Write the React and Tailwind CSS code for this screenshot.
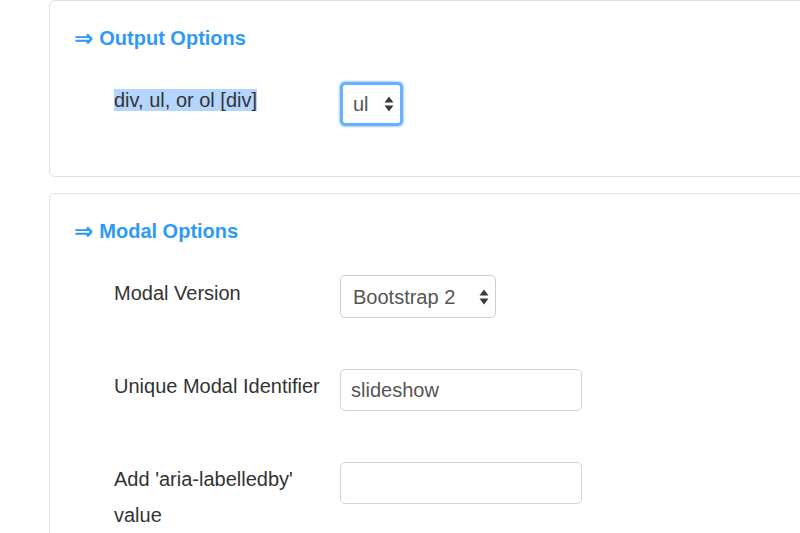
import React from 'react'

const Arrows = () => (
  <svg width="10" height="16" viewBox="0 0 10 16" className="shrink-0">
    <path d="M5 0.5 L9.5 6.5 L0.5 6.5 Z" fill="#3a3a3a" />
    <path d="M0.5 9.5 L9.5 9.5 L5 15.5 Z" fill="#3a3a3a" />
  </svg>
)

const Heading = ({children}) => (
  <h2 className="h-[28px] flex items-center text-[20px] leading-7 font-bold text-[#2f9af5] mb-[30px]">
    <span className="font-['DejaVu_Sans',sans-serif] text-[23px] leading-none mr-[6px]">⇒</span>
    <span>{children}</span>
  </h2>
)

const Row = ({label, children, last}) => (
  <div className={"flex items-start " + (last ? "mb-[12px]" : "mb-[50px]")}>
    <div className="w-[266px] pl-[40px] text-[20px] leading-[36px] text-[#333] shrink-0">{label}</div>
    {children}
  </div>
)

const App = () => {
  return (
    <div className="w-[800px] h-[533px] overflow-hidden bg-white font-['Liberation_Sans',Arial,sans-serif]">
      <div className="ml-[49px] w-[900px]">
        {/* output options */}
        <div className="border border-[#e2e2e2] rounded-[6px] pt-[23px] pl-[24px] mb-[16px]">
          <Heading>Output Options</Heading>
          <Row label={<span className="bg-[#b4d6fe]">div, ul, or ol [div]</span>}>
            <div className="w-[63px] h-[44px] rounded-[5px] border-[3px] border-[#6aaff8] shadow-[0_0_2px_1px_#a9d0fb] flex items-center justify-between pl-[10px] pr-[6px] text-[20px] text-[#555]">
              <span>ul</span>
              <Arrows />
            </div>
          </Row>
        </div>

        {/* modal options */}
        <div className="border border-[#e2e2e2] rounded-[6px] pt-[23px] pl-[24px]">
          <Heading>Modal Options</Heading>
          <Row label="Modal Version">
            <div className="w-[156px] h-[43px] rounded-[5px] border border-[#cfcfcf] flex items-center justify-between pl-[12px] pr-[6px] text-[20px] text-[#555]">
              <span>Bootstrap 2</span>
              <Arrows />
            </div>
          </Row>
          <Row label="Unique Modal Identifier">
            <input
              defaultValue="slideshow"
              className="w-[242px] h-[42px] rounded-[5px] border border-[#d4d4d4] px-[10px] text-[20px] text-[#555] outline-none mt-[1px]"
            />
          </Row>
          <Row label={<>Add 'aria-labelledby'<br />value</>} last>
            <input
              className="w-[242px] h-[42px] rounded-[5px] border border-[#d4d4d4] px-[10px] text-[20px] text-[#555] outline-none mt-[1px]"
            />
          </Row>
        </div>
      </div>
    </div>
  )
}

export default App
